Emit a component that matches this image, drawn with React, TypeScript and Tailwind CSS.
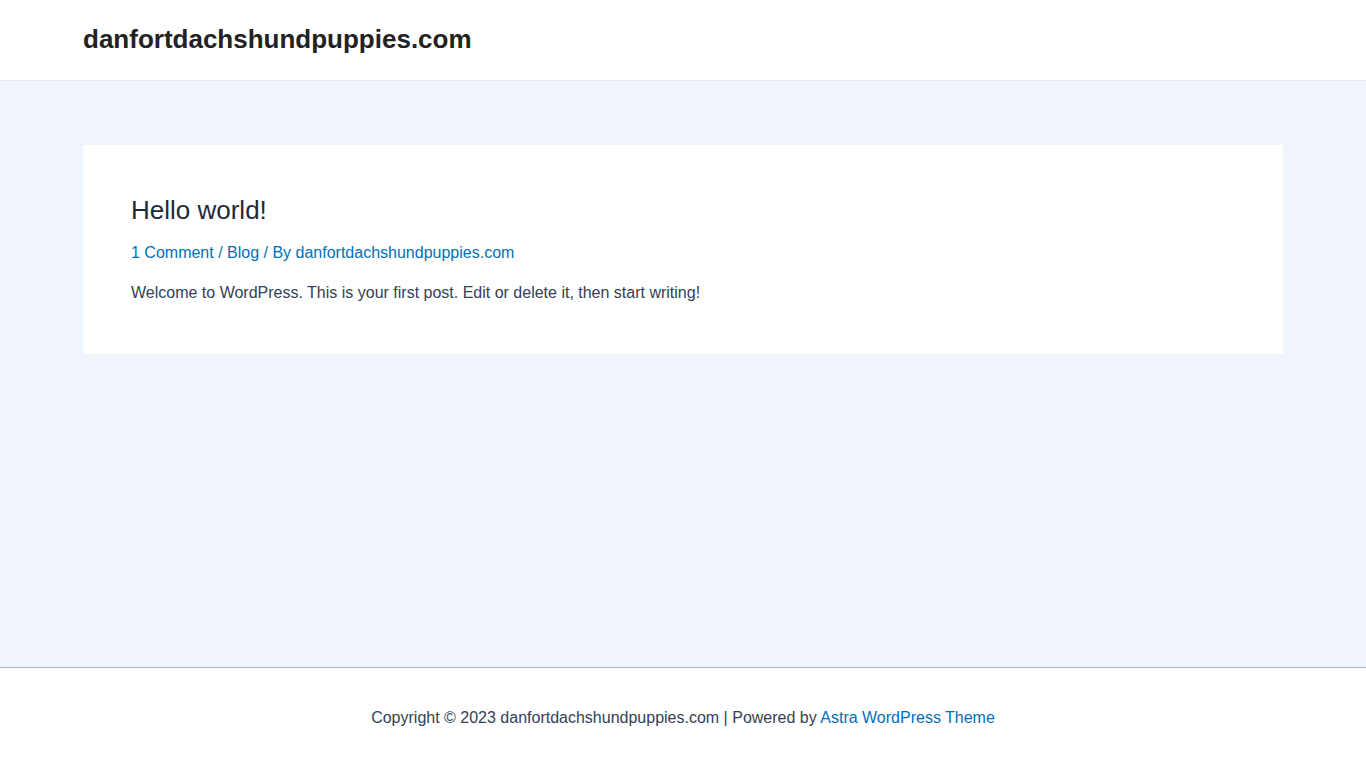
import React from 'react';

const font = { fontFamily: '"Liberation Sans", Arial, sans-serif' };

const App: React.FC = () => {
  return (
    <div className="flex h-screen flex-col bg-white" style={font}>
      <header className="h-[81px] shrink-0 border-b border-[#eaeaea] bg-white">
        <div className="flex h-[80px] items-center px-[83px] pb-[2px]">
          <a href="#" className="text-[26px] font-bold leading-none text-[#222222]">
            danfortdachshundpuppies.com
          </a>
        </div>
      </header>

      <main className="flex-1 bg-[#f0f5fb] px-[83px] pt-[64px]">
        <article className="w-[1200px] bg-white px-[48px] pt-[48px] pb-[48px]">
          <h2 className="text-[26px] leading-[34px] text-[#1e293b]">Hello world!</h2>
          <div className="mt-[13px] text-[16px] leading-[26px] text-[#0170b9]">
            <a href="#">1 Comment</a> / <a href="#">Blog</a> / By{' '}
            <a href="#">danfortdachshundpuppies.com</a>
          </div>
          <p className="mt-[14px] text-[16px] leading-[26px] text-[#334155]">
            Welcome to WordPress. This is your first post. Edit or delete it, then start writing!
          </p>
        </article>
      </main>

      <footer className="flex h-[101px] shrink-0 items-center justify-center border-t border-[#adb6be] bg-white">
        <p className="text-[16px] leading-[26px] text-[#334155]">
          Copyright © 2023 danfortdachshundpuppies.com | Powered by{' '}
          <a href="#" className="text-[#0170b9]">
            Astra WordPress Theme
          </a>
        </p>
      </footer>
    </div>
  );
};

export default App;
